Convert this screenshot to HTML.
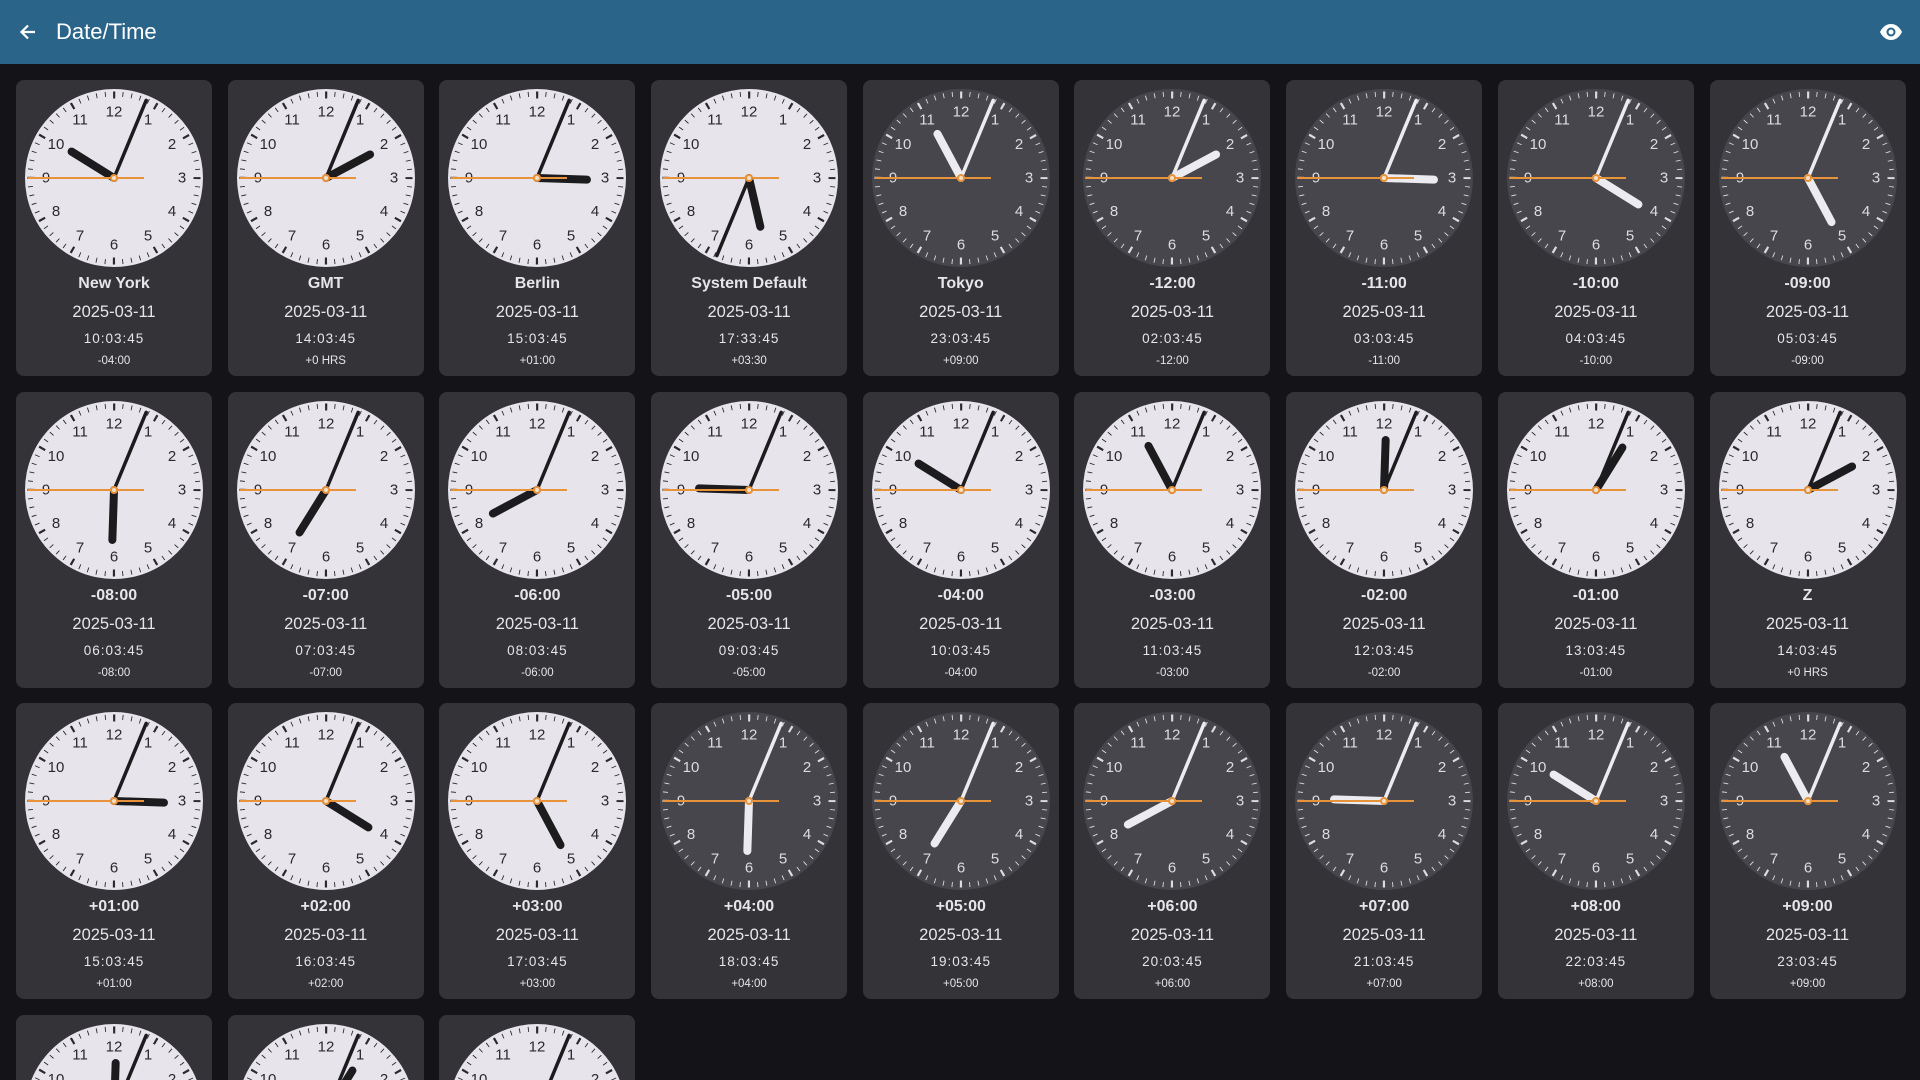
<!DOCTYPE html>
<html><head><meta charset="utf-8"><style>
*{margin:0;padding:0;box-sizing:border-box}
html,body{width:1920px;height:1080px;overflow:hidden}
body{background:#131318;font-family:"Liberation Sans",sans-serif;color:#e6e6ea;position:relative}
.hd{height:64px;background:#2a6489;position:relative}
.hd .t{position:absolute;left:56px;top:19px;font-size:22px;color:#fff}
.hd svg{position:absolute}
.w{position:absolute;left:0;top:64px;width:1920px;height:1016px;overflow:hidden}
.g{position:absolute;left:16px;top:16px;display:grid;grid-template-columns:repeat(9,196px);column-gap:15.7px;row-gap:15.5px}
.c{width:196px;height:296px;background:#333338;border-radius:8px;position:relative;text-align:center}
.c svg{position:absolute;left:0;top:0}
.L svg{color:#2a2a2e}.D svg{color:#dcdce0}
.L .f{fill:#e7e5eb}.D .f{fill:#47464c}
.L .h,.L .m{stroke:#1c1c1f}.D .h,.D .m{stroke:#ececf0}
.h{stroke-width:8;stroke-linecap:round}.m{stroke-width:3.5;stroke-linecap:round}
.s{stroke:#e8923a;stroke-width:2}
.n,.d,.tm,.o{position:absolute;left:0;right:0;color:#e6e6ea}
.n{top:195px;font-size:16px;font-weight:bold}
.d{top:223px;font-size:16.5px}
.tm{top:251px;font-size:13.5px;letter-spacing:1px}
.o{top:275px;font-size:11.5px}
</style></head><body>
<svg width="0" height="0" style="position:absolute"><defs>
<g id="fc">
<circle r="84" fill="none" stroke="currentColor" stroke-width="5" stroke-dasharray="0.9 7.896" stroke-dashoffset="0.45"/>
<circle r="83" fill="none" stroke="currentColor" stroke-width="7" stroke-dasharray="2.2 41.26" stroke-dashoffset="1.1"/>
<g fill="currentColor" font-family="Liberation Sans,sans-serif" font-size="15" text-anchor="middle" dominant-baseline="central">
<text x="0" y="-66">12</text><text x="34" y="-58">1</text><text x="58" y="-33.5">2</text><text x="68" y="0">3</text><text x="58" y="33.5">4</text><text x="34" y="58">5</text><text x="0" y="67">6</text><text x="-34" y="58">7</text><text x="-58" y="33.5">8</text><text x="-68" y="0">9</text><text x="-58" y="-33.5">10</text><text x="-34" y="-58">11</text>
</g></g>
<g id="ct"><line class="s" x1="-86" y1="0" x2="30" y2="0"/><circle r="4" fill="#e8923a"/><circle r="2" fill="#f3e0c8"/></g>
</defs></svg>
<div class="hd">
<svg style="left:18px;top:22px" width="20" height="20" viewBox="0 0 20 20"><path d="M17 10H4M10 3.5L3.5 10L10 16.5" stroke="#fff" stroke-width="2.2" fill="none"/></svg>
<div class="t">Date/Time</div>
<svg style="left:1879px;top:21px" width="24" height="22" viewBox="0 0 24 22"><path d="M1 11C4 5 8 3 12 3s8 2 11 8c-3 6-7 8-11 8S4 17 1 11z" fill="#fff"/><circle cx="12" cy="11" r="4.5" fill="#2a6489"/><circle cx="12" cy="11" r="2.5" fill="#fff"/></svg>
</div>
<div class="w"><div class="g">
<div class="c L"><svg width="196" height="196" viewBox="-98 -98 196 196"><circle class="f" r="89"/><use href="#fc"/><line class="h" y2="-50" transform="rotate(301.9)"/><line class="m" y2="-84" transform="rotate(22.5)"/><use href="#ct"/></svg><div class="n">New York</div><div class="d">2025-03-11</div><div class="tm">10:03:45</div><div class="o">-04:00</div></div>
<div class="c L"><svg width="196" height="196" viewBox="-98 -98 196 196"><circle class="f" r="89"/><use href="#fc"/><line class="h" y2="-50" transform="rotate(61.9)"/><line class="m" y2="-84" transform="rotate(22.5)"/><use href="#ct"/></svg><div class="n">GMT</div><div class="d">2025-03-11</div><div class="tm">14:03:45</div><div class="o">+0 HRS</div></div>
<div class="c L"><svg width="196" height="196" viewBox="-98 -98 196 196"><circle class="f" r="89"/><use href="#fc"/><line class="h" y2="-50" transform="rotate(91.9)"/><line class="m" y2="-84" transform="rotate(22.5)"/><use href="#ct"/></svg><div class="n">Berlin</div><div class="d">2025-03-11</div><div class="tm">15:03:45</div><div class="o">+01:00</div></div>
<div class="c L"><svg width="196" height="196" viewBox="-98 -98 196 196"><circle class="f" r="89"/><use href="#fc"/><line class="h" y2="-50" transform="rotate(166.9)"/><line class="m" y2="-84" transform="rotate(202.5)"/><use href="#ct"/></svg><div class="n">System Default</div><div class="d">2025-03-11</div><div class="tm">17:33:45</div><div class="o">+03:30</div></div>
<div class="c D"><svg width="196" height="196" viewBox="-98 -98 196 196"><circle class="f" r="89"/><use href="#fc"/><line class="h" y2="-50" transform="rotate(331.9)"/><line class="m" y2="-84" transform="rotate(22.5)"/><use href="#ct"/></svg><div class="n">Tokyo</div><div class="d">2025-03-11</div><div class="tm">23:03:45</div><div class="o">+09:00</div></div>
<div class="c D"><svg width="196" height="196" viewBox="-98 -98 196 196"><circle class="f" r="89"/><use href="#fc"/><line class="h" y2="-50" transform="rotate(61.9)"/><line class="m" y2="-84" transform="rotate(22.5)"/><use href="#ct"/></svg><div class="n">-12:00</div><div class="d">2025-03-11</div><div class="tm">02:03:45</div><div class="o">-12:00</div></div>
<div class="c D"><svg width="196" height="196" viewBox="-98 -98 196 196"><circle class="f" r="89"/><use href="#fc"/><line class="h" y2="-50" transform="rotate(91.9)"/><line class="m" y2="-84" transform="rotate(22.5)"/><use href="#ct"/></svg><div class="n">-11:00</div><div class="d">2025-03-11</div><div class="tm">03:03:45</div><div class="o">-11:00</div></div>
<div class="c D"><svg width="196" height="196" viewBox="-98 -98 196 196"><circle class="f" r="89"/><use href="#fc"/><line class="h" y2="-50" transform="rotate(121.9)"/><line class="m" y2="-84" transform="rotate(22.5)"/><use href="#ct"/></svg><div class="n">-10:00</div><div class="d">2025-03-11</div><div class="tm">04:03:45</div><div class="o">-10:00</div></div>
<div class="c D"><svg width="196" height="196" viewBox="-98 -98 196 196"><circle class="f" r="89"/><use href="#fc"/><line class="h" y2="-50" transform="rotate(151.9)"/><line class="m" y2="-84" transform="rotate(22.5)"/><use href="#ct"/></svg><div class="n">-09:00</div><div class="d">2025-03-11</div><div class="tm">05:03:45</div><div class="o">-09:00</div></div>

<div class="c L"><svg width="196" height="196" viewBox="-98 -98 196 196"><circle class="f" r="89"/><use href="#fc"/><line class="h" y2="-50" transform="rotate(181.9)"/><line class="m" y2="-84" transform="rotate(22.5)"/><use href="#ct"/></svg><div class="n">-08:00</div><div class="d">2025-03-11</div><div class="tm">06:03:45</div><div class="o">-08:00</div></div>
<div class="c L"><svg width="196" height="196" viewBox="-98 -98 196 196"><circle class="f" r="89"/><use href="#fc"/><line class="h" y2="-50" transform="rotate(211.9)"/><line class="m" y2="-84" transform="rotate(22.5)"/><use href="#ct"/></svg><div class="n">-07:00</div><div class="d">2025-03-11</div><div class="tm">07:03:45</div><div class="o">-07:00</div></div>
<div class="c L"><svg width="196" height="196" viewBox="-98 -98 196 196"><circle class="f" r="89"/><use href="#fc"/><line class="h" y2="-50" transform="rotate(241.9)"/><line class="m" y2="-84" transform="rotate(22.5)"/><use href="#ct"/></svg><div class="n">-06:00</div><div class="d">2025-03-11</div><div class="tm">08:03:45</div><div class="o">-06:00</div></div>
<div class="c L"><svg width="196" height="196" viewBox="-98 -98 196 196"><circle class="f" r="89"/><use href="#fc"/><line class="h" y2="-50" transform="rotate(271.9)"/><line class="m" y2="-84" transform="rotate(22.5)"/><use href="#ct"/></svg><div class="n">-05:00</div><div class="d">2025-03-11</div><div class="tm">09:03:45</div><div class="o">-05:00</div></div>
<div class="c L"><svg width="196" height="196" viewBox="-98 -98 196 196"><circle class="f" r="89"/><use href="#fc"/><line class="h" y2="-50" transform="rotate(301.9)"/><line class="m" y2="-84" transform="rotate(22.5)"/><use href="#ct"/></svg><div class="n">-04:00</div><div class="d">2025-03-11</div><div class="tm">10:03:45</div><div class="o">-04:00</div></div>
<div class="c L"><svg width="196" height="196" viewBox="-98 -98 196 196"><circle class="f" r="89"/><use href="#fc"/><line class="h" y2="-50" transform="rotate(331.9)"/><line class="m" y2="-84" transform="rotate(22.5)"/><use href="#ct"/></svg><div class="n">-03:00</div><div class="d">2025-03-11</div><div class="tm">11:03:45</div><div class="o">-03:00</div></div>
<div class="c L"><svg width="196" height="196" viewBox="-98 -98 196 196"><circle class="f" r="89"/><use href="#fc"/><line class="h" y2="-50" transform="rotate(1.9)"/><line class="m" y2="-84" transform="rotate(22.5)"/><use href="#ct"/></svg><div class="n">-02:00</div><div class="d">2025-03-11</div><div class="tm">12:03:45</div><div class="o">-02:00</div></div>
<div class="c L"><svg width="196" height="196" viewBox="-98 -98 196 196"><circle class="f" r="89"/><use href="#fc"/><line class="h" y2="-50" transform="rotate(31.9)"/><line class="m" y2="-84" transform="rotate(22.5)"/><use href="#ct"/></svg><div class="n">-01:00</div><div class="d">2025-03-11</div><div class="tm">13:03:45</div><div class="o">-01:00</div></div>
<div class="c L"><svg width="196" height="196" viewBox="-98 -98 196 196"><circle class="f" r="89"/><use href="#fc"/><line class="h" y2="-50" transform="rotate(61.9)"/><line class="m" y2="-84" transform="rotate(22.5)"/><use href="#ct"/></svg><div class="n">Z</div><div class="d">2025-03-11</div><div class="tm">14:03:45</div><div class="o">+0 HRS</div></div>

<div class="c L"><svg width="196" height="196" viewBox="-98 -98 196 196"><circle class="f" r="89"/><use href="#fc"/><line class="h" y2="-50" transform="rotate(91.9)"/><line class="m" y2="-84" transform="rotate(22.5)"/><use href="#ct"/></svg><div class="n">+01:00</div><div class="d">2025-03-11</div><div class="tm">15:03:45</div><div class="o">+01:00</div></div>
<div class="c L"><svg width="196" height="196" viewBox="-98 -98 196 196"><circle class="f" r="89"/><use href="#fc"/><line class="h" y2="-50" transform="rotate(121.9)"/><line class="m" y2="-84" transform="rotate(22.5)"/><use href="#ct"/></svg><div class="n">+02:00</div><div class="d">2025-03-11</div><div class="tm">16:03:45</div><div class="o">+02:00</div></div>
<div class="c L"><svg width="196" height="196" viewBox="-98 -98 196 196"><circle class="f" r="89"/><use href="#fc"/><line class="h" y2="-50" transform="rotate(151.9)"/><line class="m" y2="-84" transform="rotate(22.5)"/><use href="#ct"/></svg><div class="n">+03:00</div><div class="d">2025-03-11</div><div class="tm">17:03:45</div><div class="o">+03:00</div></div>
<div class="c D"><svg width="196" height="196" viewBox="-98 -98 196 196"><circle class="f" r="89"/><use href="#fc"/><line class="h" y2="-50" transform="rotate(181.9)"/><line class="m" y2="-84" transform="rotate(22.5)"/><use href="#ct"/></svg><div class="n">+04:00</div><div class="d">2025-03-11</div><div class="tm">18:03:45</div><div class="o">+04:00</div></div>
<div class="c D"><svg width="196" height="196" viewBox="-98 -98 196 196"><circle class="f" r="89"/><use href="#fc"/><line class="h" y2="-50" transform="rotate(211.9)"/><line class="m" y2="-84" transform="rotate(22.5)"/><use href="#ct"/></svg><div class="n">+05:00</div><div class="d">2025-03-11</div><div class="tm">19:03:45</div><div class="o">+05:00</div></div>
<div class="c D"><svg width="196" height="196" viewBox="-98 -98 196 196"><circle class="f" r="89"/><use href="#fc"/><line class="h" y2="-50" transform="rotate(241.9)"/><line class="m" y2="-84" transform="rotate(22.5)"/><use href="#ct"/></svg><div class="n">+06:00</div><div class="d">2025-03-11</div><div class="tm">20:03:45</div><div class="o">+06:00</div></div>
<div class="c D"><svg width="196" height="196" viewBox="-98 -98 196 196"><circle class="f" r="89"/><use href="#fc"/><line class="h" y2="-50" transform="rotate(271.9)"/><line class="m" y2="-84" transform="rotate(22.5)"/><use href="#ct"/></svg><div class="n">+07:00</div><div class="d">2025-03-11</div><div class="tm">21:03:45</div><div class="o">+07:00</div></div>
<div class="c D"><svg width="196" height="196" viewBox="-98 -98 196 196"><circle class="f" r="89"/><use href="#fc"/><line class="h" y2="-50" transform="rotate(301.9)"/><line class="m" y2="-84" transform="rotate(22.5)"/><use href="#ct"/></svg><div class="n">+08:00</div><div class="d">2025-03-11</div><div class="tm">22:03:45</div><div class="o">+08:00</div></div>
<div class="c D"><svg width="196" height="196" viewBox="-98 -98 196 196"><circle class="f" r="89"/><use href="#fc"/><line class="h" y2="-50" transform="rotate(331.9)"/><line class="m" y2="-84" transform="rotate(22.5)"/><use href="#ct"/></svg><div class="n">+09:00</div><div class="d">2025-03-11</div><div class="tm">23:03:45</div><div class="o">+09:00</div></div>

<div class="c L"><svg width="196" height="196" viewBox="-98 -98 196 196"><circle class="f" r="89"/><use href="#fc"/><line class="h" y2="-50" transform="rotate(1.9)"/><line class="m" y2="-84" transform="rotate(22.5)"/><use href="#ct"/></svg><div class="n">+10:00</div><div class="d">2025-03-12</div><div class="tm">00:03:45</div><div class="o">+10:00</div></div>
<div class="c L"><svg width="196" height="196" viewBox="-98 -98 196 196"><circle class="f" r="89"/><use href="#fc"/><line class="h" y2="-50" transform="rotate(31.9)"/><line class="m" y2="-84" transform="rotate(22.5)"/><use href="#ct"/></svg><div class="n">+11:00</div><div class="d">2025-03-12</div><div class="tm">01:03:45</div><div class="o">+11:00</div></div>
<div class="c L"><svg width="196" height="196" viewBox="-98 -98 196 196"><circle class="f" r="89"/><use href="#fc"/><line class="h" y2="-50" transform="rotate(61.9)"/><line class="m" y2="-84" transform="rotate(22.5)"/><use href="#ct"/></svg><div class="n">+12:00</div><div class="d">2025-03-12</div><div class="tm">02:03:45</div><div class="o">+12:00</div></div>
</div></div>
</body></html>
